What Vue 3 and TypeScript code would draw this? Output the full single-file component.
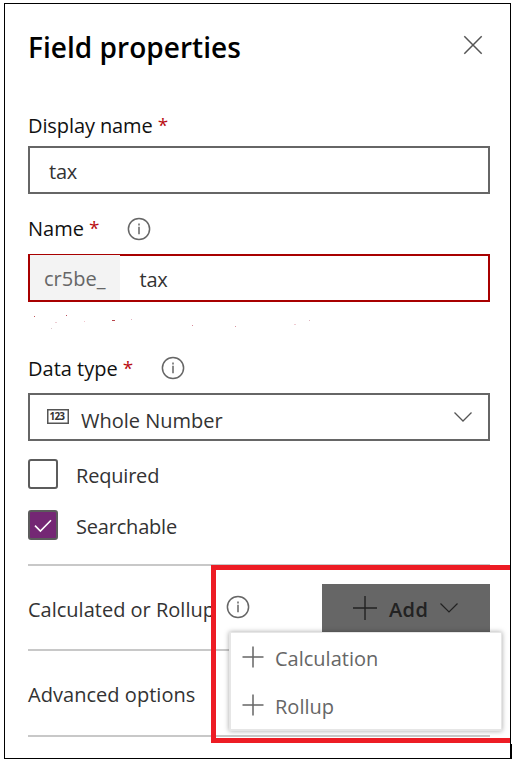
<script setup lang="ts">
import { ref } from 'vue'

interface Speck {
  x: number
  y: number
  w: number
  color: string
}

const displayName = ref('tax')
const schemaPrefix = 'cr5be_'
const schemaName = ref('tax')
const dataType = ref('Whole Number')
const options = ref([
  { label: 'Required', checked: false },
  { label: 'Searchable', checked: true },
])
const menuItems = ['Calculation', 'Rollup']

const specks: Speck[] = [
  { x: 6, y: 14, w: 1, color: '#c25a5e' },
  { x: 38, y: 13, w: 1, color: '#b9505c' },
  { x: 27, y: 20, w: 2, color: '#eccdd3' },
  { x: 23, y: 26, w: 1, color: '#dcc8cc' },
  { x: 56, y: 19, w: 1, color: '#f0c4cc' },
  { x: 84, y: 18, w: 3, color: '#b8454c' },
  { x: 103, y: 17, w: 1, color: '#e3b4bf' },
  { x: 164, y: 23, w: 1, color: '#d98a98' },
  { x: 207, y: 24, w: 1, color: '#d995a0' },
  { x: 266, y: 22, w: 2, color: '#efccd3' },
  { x: 281, y: 18, w: 1, color: '#dfb6c0' },
]
</script>

<template>
  <main class="page">
    <section class="panel">
      <header class="head">
        <h1>Field properties</h1>
        <svg class="close" width="20" height="20" viewBox="0 0 20 20">
          <path d="M1.3 1.3 18.7 18.7M18.7 1.3 1.3 18.7" />
        </svg>
      </header>

      <div class="label display-label">Display name<span class="star">*</span></div>
      <div class="input"><span class="value">{{ displayName }}</span></div>

      <div class="label name-label">
        Name<span class="star">*</span>
        <svg class="info" width="24" height="24" viewBox="0 0 24 24">
          <circle cx="12" cy="12" r="10.6" />
          <path d="M12 9.8V17.2M12 6.6V8.4" />
        </svg>
      </div>
      <div class="input invalid">
        <span class="prefix">{{ schemaPrefix }}</span>
        <span class="value schema">{{ schemaName }}</span>
      </div>

      <svg class="specks" width="462" height="54" viewBox="0 0 462 54" shape-rendering="crispEdges">
        <rect v-for="(s, i) in specks" :key="i" :x="s.x" :y="s.y" :width="s.w" height="1" :fill="s.color" />
      </svg>

      <div class="label type-label">
        Data type<span class="star">*</span>
        <svg class="info" width="24" height="24" viewBox="0 0 24 24">
          <circle cx="12" cy="12" r="10.6" />
          <path d="M12 9.8V17.2M12 6.6V8.4" />
        </svg>
      </div>
      <div class="input select">
        <svg class="numeric" width="22" height="15" viewBox="0 0 22 15">
          <rect x="0.75" y="0.75" width="20.5" height="13.5" />
          <text x="2.5" y="11.2">123</text>
        </svg>
        <span class="type-value">{{ dataType }}</span>
        <svg class="chevron" width="18" height="10" viewBox="0 0 18 10">
          <path d="M0.5 0.5 9 9 17.5 0.5" />
        </svg>
      </div>

      <div class="checks">
        <div v-for="o in options" :key="o.label" class="check">
          <span class="box" :class="{ on: o.checked }">
            <svg v-if="o.checked" width="18" height="14" viewBox="0 0 18 14">
              <path d="M1 6.6 6.4 12 17 1.3" />
            </svg>
          </span>
          <span class="check-label">{{ o.label }}</span>
        </div>
      </div>

      <div class="row calc">
        <span class="calc-label">Calculated or Rollup</span>
        <svg class="info" width="24" height="24" viewBox="0 0 24 24">
          <circle cx="12" cy="12" r="10.6" />
          <path d="M12 9.8V17.2M12 6.6V8.4" />
        </svg>
        <div class="add">
          <svg width="24" height="24" viewBox="0 0 24 24"><path d="M12 0V24M0 12H24" /></svg>
          <b>Add</b>
          <svg class="add-chevron" width="18" height="10" viewBox="0 0 18 10">
            <path d="M0.5 0.5 9 9 17.5 0.5" />
          </svg>
        </div>
      </div>
      <div class="row advanced"><span>Advanced options</span></div>
    </section>

    <div class="highlight"></div>
    <div class="menu">
      <div v-for="item in menuItems" :key="item" class="item">
        <svg width="22" height="22" viewBox="0 0 22 22"><path d="M11 0.5V21.5M0.5 11H21.5" /></svg>
        <span>{{ item }}</span>
      </div>
    </div>
    <div class="corner"></div>
  </main>
</template>

<style>
body {
  background: #fff;
}
</style>

<style scoped>
.page {
  position: relative;
  box-sizing: border-box;
  width: 514px;
  height: 762px;
  padding: 3px 3px 3px 4px;
  overflow: hidden;
  background: #fff;
  font-family: 'Open Sans', 'Noto Sans', sans-serif;
  font-size: 20px;
  line-height: 25px;
  color: #333;
  white-space: nowrap;
}
.panel {
  box-sizing: border-box;
  height: 756px;
  padding: 27px 20px 0 23px;
  border: 1px solid #000;
}
svg {
  display: block;
  flex: none;
  fill: none;
}
.head {
  display: flex;
  justify-content: space-between;
  height: 32px;
  padding-right: 7px;
}
h1 {
  margin: 0;
  font-size: 28px;
  font-weight: 600;
  line-height: 32px;
  letter-spacing: 0.04px;
  color: #000;
}
.close {
  margin-top: 4px;
  stroke: #555;
  stroke-width: 1.5;
}
.label {
  display: flex;
  height: 24px;
  color: #111;
}
.star {
  width: 10px;
  margin-left: 5px;
  font-size: 19px;
  color: #b90d12;
}
.display-label {
  margin: 50px 0 9px;
  letter-spacing: -0.1px;
}
.name-label {
  margin: 22px 0 14px;
}
.type-label {
  margin-bottom: 13px;
}
.info {
  stroke: #666;
  stroke-width: 1.5;
}
.label .info {
  margin: 1px 0 0 28px;
}
.type-label .info {
  margin-top: 0;
}
.input {
  display: flex;
  box-sizing: border-box;
  height: 48px;
  border: 2px solid #666;
}
.value {
  padding: 11px 0 0 19px;
  letter-spacing: -0.2px;
}
.invalid {
  border-color: #a80000;
}
.prefix {
  box-sizing: border-box;
  width: 90px;
  height: 45px;
  margin-top: -1px;
  padding: 11px 0 0 14px;
  background: #f3f3f3;
  color: #666;
}
.schema {
  padding-left: 19.5px;
}
.select {
  align-items: flex-start;
}
.numeric {
  margin: 14px 0 0 17px;
  stroke: #555;
  stroke-width: 1.5;
}
.numeric text {
  font-family: 'Open Sans', sans-serif;
  font-size: 10px;
  font-weight: 700;
  letter-spacing: -0.8px;
  fill: #333;
  stroke: none;
}
.type-value {
  margin: 13px 0 0 12px;
}
.chevron {
  margin: 17px 16px 0 auto;
  stroke: #555;
  stroke-width: 1.3;
}
.checks {
  display: grid;
  gap: 21px;
  padding: 18px 0 24px;
}
.check {
  display: flex;
  height: 30px;
}
.box {
  display: flex;
  box-sizing: border-box;
  width: 30px;
  height: 30px;
  border: 2px solid #5c5c5c;
  border-radius: 3px;
}
.box.on {
  background: #742774;
}
.box svg {
  margin: 7px 0 0 4px;
  stroke: #fff;
  stroke-width: 1.6;
}
.check-label {
  margin: 4px 0 0 18px;
  letter-spacing: -0.2px;
}
.row {
  display: flex;
  box-sizing: border-box;
  border-top: 2px solid #c8c8c8;
}
.calc {
  height: 85px;
}
.calc-label {
  width: 198px;
  margin-top: 31px;
}
.calc .info {
  margin-top: 29px;
}
.add {
  display: flex;
  box-sizing: border-box;
  width: 168px;
  height: 48px;
  margin: 18px 0 0 auto;
  padding: 12px 0 0 31px;
  background: #666;
  color: #222;
}
.add svg {
  stroke: #222;
  stroke-width: 1.4;
}
.add b {
  margin: 1px 0 0 12px;
  font-weight: 600;
  letter-spacing: 0.4px;
}
.add .add-chevron {
  margin: 7px 0 0 12px;
  stroke-width: 1.2;
}
.advanced {
  height: 88px;
  padding-top: 31px;
  letter-spacing: 0.04px;
  border-bottom: 2px solid #c8c8c8;
}
.highlight {
  position: absolute;
  box-sizing: border-box;
  top: 565px;
  left: 211px;
  width: 299px;
  height: 178px;
  border: 5px solid #ed1c24;
  border-right: 0;
}
.menu {
  position: absolute;
  box-sizing: border-box;
  top: 632px;
  left: 229px;
  width: 273px;
  height: 99px;
  padding: 1px 0 0 11px;
  border: solid #e6e6e6;
  border-width: 1px 1px 2px 2px;
  background: #fff;
  box-shadow: 0 0 5px rgba(0, 0, 0, 0.35);
  color: #666;
}
.item {
  display: flex;
  gap: 11px;
  height: 48px;
  padding-top: 12px;
  box-sizing: border-box;
}
.item svg {
  stroke: #666;
  stroke-width: 1.5;
}
.corner {
  position: absolute;
  top: 744px;
  left: 510px;
  width: 2px;
  height: 15px;
  background: #000;
}
</style>
